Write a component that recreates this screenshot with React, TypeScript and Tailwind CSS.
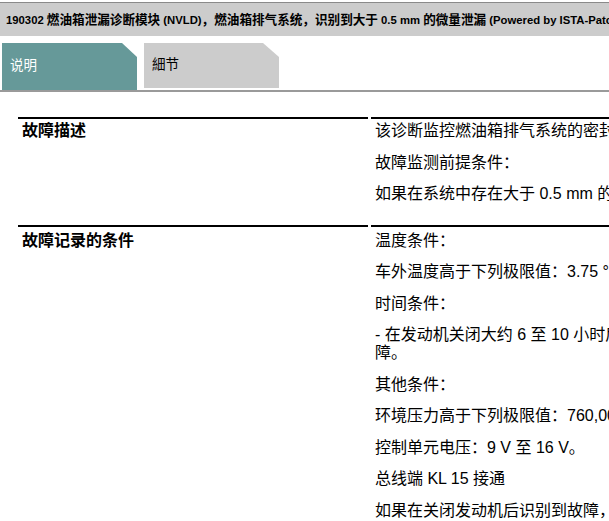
import React from "react";

const body = { fontFamily: '"Liberation Sans", Arial, "Noto Sans CJK SC", sans-serif' };

function P({ children }: { children: React.ReactNode }) {
  return <p className="whitespace-nowrap leading-[18px] mb-[13.5px]">{children}</p>;
}

function C({ children }: { children: React.ReactNode }) {
  return <span className="text-[12.6px]">{children}</span>;
}

export default function App() {
  return (
    <div className="w-[609px] h-[521px] overflow-hidden bg-white text-black" style={body}>
      {/* clipped previous line */}
      <div className="h-[2px] overflow-hidden">
        <div className="-mt-[12px] flex gap-[90px] pl-[2px] text-[12px] leading-[14px] whitespace-nowrap">
          <span>故障代码说明</span>
          <span>诊断模块 NVLD</span>
        </div>
      </div>
      {/* title bar */}
      <div className="h-[34px] border-t border-[#8a8a8a] bg-[#cccccc] flex items-center pl-[6px] overflow-hidden">
        <span className="whitespace-nowrap font-bold text-[11.3px] leading-[16px]">
          190302 <C>燃油箱泄漏诊断模块</C> (NVLD)<C>，燃油箱排气系统，识别到大于</C> 0.5 mm <C>的微量泄漏</C> (Powered by ISTA-Patch)
        </span>
      </div>
      {/* tabs */}
      <div className="mt-[7px] flex items-start gap-[7px] pl-[2px] border-b-2 border-[#9a9a9a]">
        <div className="w-[135px] h-[47px] bg-[#669999] text-white text-[13.5px] pl-[8px] flex items-center [clip-path:polygon(0_0,120px_0,100%_14px,100%_100%,0_100%)]">
          说明
        </div>
        <div className="w-[135px] h-[45px] bg-[#cccccc] text-black text-[13.5px] pl-[8px] flex items-center [clip-path:polygon(0_0,119px_0,100%_14px,100%_100%,0_100%)]">
          細节
        </div>
      </div>
      {/* table */}
      <div className="mt-[25px] pl-[18px]">
        <div className="grid grid-cols-[350px_480px] gap-x-[3px] gap-y-[2px] text-[16px]">
          <div className="border-t-2 border-black pt-[3px] pb-[6px] pl-[4px]">
            <p className="font-bold text-[16px] leading-[18px]">故障描述</p>
          </div>
          <div className="border-t-2 border-black pt-[3px] pb-[6px] pl-[4px]">
            <P>该诊断监控燃油箱排气系统的密封性。</P>
            <P>故障监测前提条件：</P>
            <P>如果在系统中存在大于 0.5 mm 的泄漏，则识别到故障。</P>
          </div>
          <div className="border-t-2 border-black pt-[5px] pb-[6px] pl-[4px]">
            <p className="font-bold text-[16px] leading-[18px]">故障记录的条件</p>
          </div>
          <div className="border-t-2 border-black pt-[5px] pb-[6px] pl-[4px]">
            <P>温度条件：</P>
            <P>车外温度高于下列极限值：3.75 °C。</P>
            <P>时间条件：</P>
            <P>
              - 在发动机关闭大约 6 至 10 小时后进行检测，如果识别到泄漏，则记录故
              <br />
              障。
            </P>
            <P>其他条件：</P>
            <P>环境压力高于下列极限值：760,00 hPa。</P>
            <P>控制单元电压：9 V 至 16 V。</P>
            <P>总线端 KL 15 接通</P>
            <P>如果在关闭发动机后识别到故障，则在下次发动机启动时记录故障。</P>
          </div>
        </div>
      </div>
    </div>
  );
}
